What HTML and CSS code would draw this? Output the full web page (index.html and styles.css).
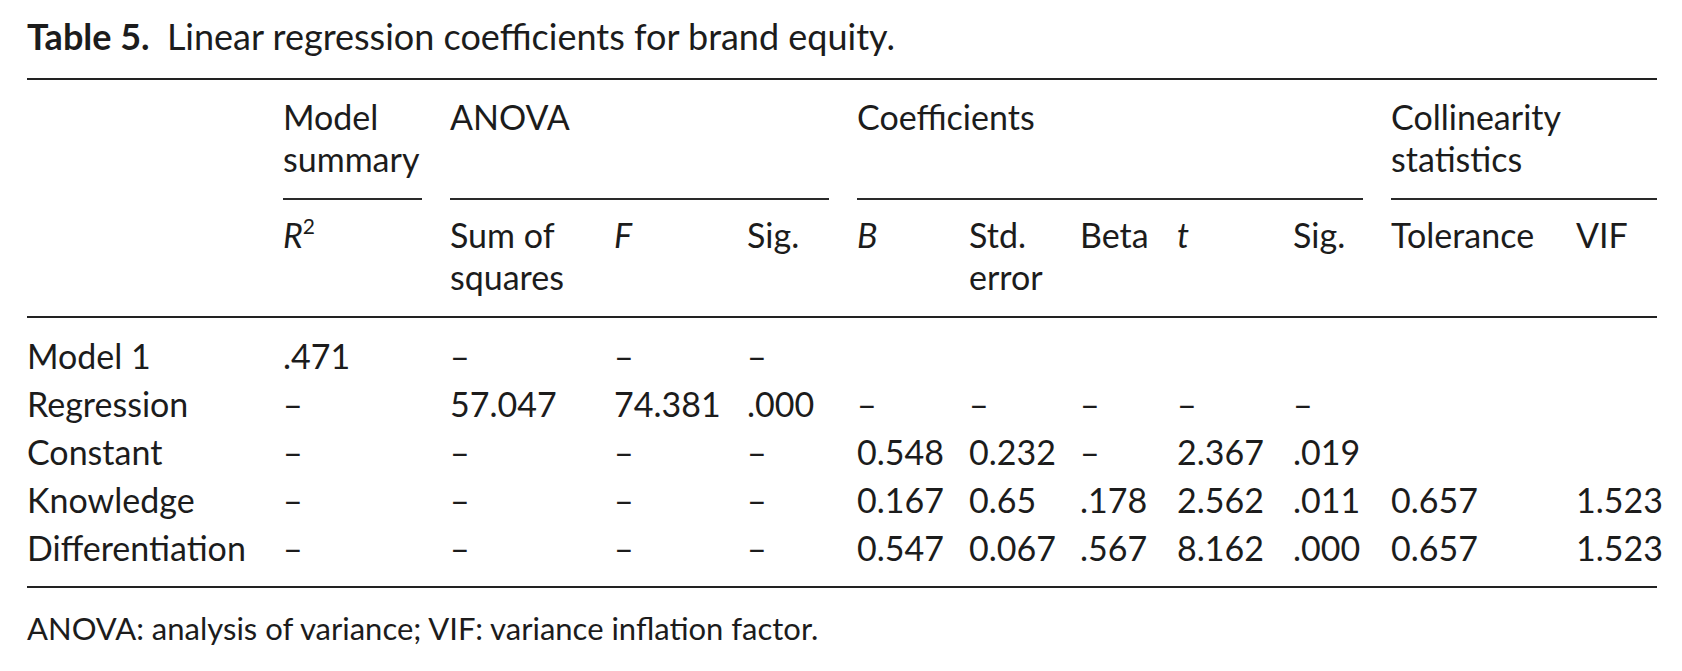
FILE: index.html
```html
<!DOCTYPE html>
<html lang="en">
<head>
<meta charset="utf-8">
<title>Table 5</title>
<link rel="stylesheet" href="styles.css">
</head>
<body>
<div class="page">
  <div class="caption"><span class="label">Table 5.</span> Linear regression coefficients for brand equity.</div>
  <table class="reg">
    <colgroup>
      <col class="c-stub"><col class="c-r2"><col class="c-ss"><col class="c-f"><col class="c-sig1">
      <col class="c-b"><col class="c-se"><col class="c-beta"><col class="c-t"><col class="c-sig2">
      <col class="c-tol"><col class="c-vif">
    </colgroup>
    <thead>
      <tr class="grp-row">
        <th></th>
        <th><div class="grp">Model<br>summary</div></th>
        <th colspan="3"><div class="grp">ANOVA</div></th>
        <th colspan="5"><div class="grp">Coefficients</div></th>
        <th colspan="2"><div class="grp last">Collinearity<br>statistics</div></th>
      </tr>
      <tr class="sub-row">
        <th></th>
        <th><i>R</i><sup>2</sup></th>
        <th>Sum of<br>squares</th>
        <th><i>F</i></th>
        <th>Sig.</th>
        <th><i>B</i></th>
        <th>Std.<br>error</th>
        <th>Beta</th>
        <th><i>t</i></th>
        <th>Sig.</th>
        <th>Tolerance</th>
        <th>VIF</th>
      </tr>
    </thead>
    <tbody>
      <tr class="first">
        <td>Model 1</td><td>.471</td><td>–</td><td>–</td><td>–</td>
        <td></td><td></td><td></td><td></td><td></td><td></td><td></td>
      </tr>
      <tr>
        <td>Regression</td><td>–</td><td>57.047</td><td>74.381</td><td>.000</td>
        <td>–</td><td>–</td><td>–</td><td>–</td><td>–</td><td></td><td></td>
      </tr>
      <tr>
        <td>Constant</td><td>–</td><td>–</td><td>–</td><td>–</td>
        <td>0.548</td><td>0.232</td><td>–</td><td>2.367</td><td>.019</td><td></td><td></td>
      </tr>
      <tr>
        <td>Knowledge</td><td>–</td><td>–</td><td>–</td><td>–</td>
        <td>0.167</td><td>0.65</td><td>.178</td><td>2.562</td><td>.011</td><td>0.657</td><td>1.523</td>
      </tr>
      <tr class="last">
        <td>Differentiation</td><td>–</td><td>–</td><td>–</td><td>–</td>
        <td>0.547</td><td>0.067</td><td>.567</td><td>8.162</td><td>.000</td><td>0.657</td><td>1.523</td>
      </tr>
    </tbody>
  </table>
  <p class="note">ANOVA: analysis of variance; VIF: variance inflation factor.</p>
</div>
</body>
</html>
```
FILE: styles.css
```css
html, body {
  margin: 0;
  padding: 0;
  background: #ffffff;
}

body {
  font-family: "Lato", "Open Sans", sans-serif;
  color: #1c1c1c;
}

.page {
  padding: 16px 25px 0 27px;
}

.caption {
  font-size: 36px;
  line-height: 40px;
  white-space: nowrap;
}

.caption .label {
  font-weight: 700;
  margin-right: 8px;
}

.reg {
  margin-top: 22px;
  width: 1630px;
  table-layout: fixed;
  border-collapse: collapse;
  border-top: 2px solid #222;
  border-bottom: 2px solid #222;
  font-size: 34px;
}

.c-stub { width: 256px; }
.c-r2   { width: 167px; }
.c-ss   { width: 164px; }
.c-f    { width: 133px; }
.c-sig1 { width: 110px; }
.c-b    { width: 112px; }
.c-se   { width: 111px; }
.c-beta { width: 97px; }
.c-t    { width: 116px; }
.c-sig2 { width: 98px; }
.c-tol  { width: 185px; }
.c-vif  { width: 81px; }

.reg th,
.reg td {
  padding: 0;
  text-align: left;
  vertical-align: top;
  font-weight: 400;
  white-space: nowrap;
}

.grp-row th {
  padding-top: 16px;
  line-height: 42px;
}

.grp {
  min-height: 84px;
  margin-right: 28px;
  padding-bottom: 18px;
  border-bottom: 2px solid #2a2a2a;
}

.grp.last {
  margin-right: 0;
}

.sub-row th {
  padding-top: 14px;
  padding-bottom: 18px;
  line-height: 42px;
  border-bottom: 2px solid #222;
}

.sub-row sup {
  font-size: 21px;
  line-height: 0;
  vertical-align: 14px;
}

.reg td {
  line-height: 48px;
}

.reg tr.first td {
  padding-top: 14px;
}

.reg tr.last td {
  padding-bottom: 14px;
}

.note {
  margin: 20px 0 0 0;
  font-size: 31px;
  line-height: 40px;
  white-space: nowrap;
}
```
